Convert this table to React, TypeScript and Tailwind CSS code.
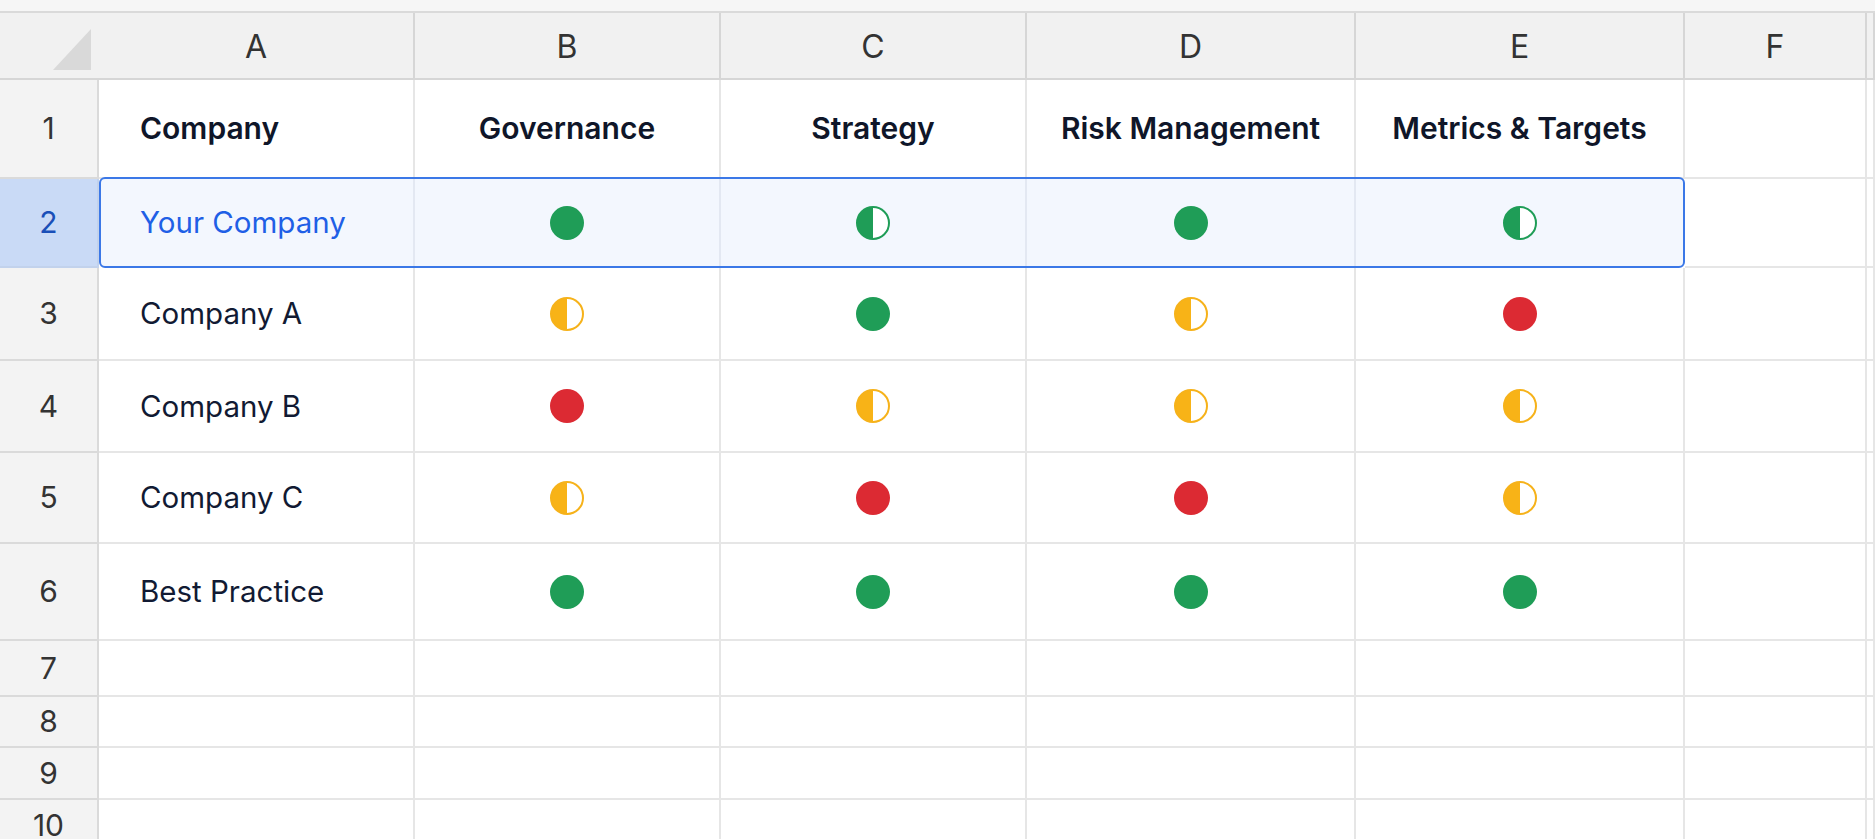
type Mark = "g" | "gh" | "y" | "yh" | "r";

const dotClass: Record<Mark, string> = {
  g: "bg-[#1f9d57]",
  gh: "border-2 border-[#1f9d57] bg-[linear-gradient(to_right,#1f9d57_50%,#ffffff_50%)]",
  y: "bg-[#f8b317]",
  yh: "border-2 border-[#f6b21a] bg-[linear-gradient(to_right,#f8b317_50%,#ffffff_50%)]",
  r: "bg-[#dc2a33]",
};

const Dot = ({ mark }: { mark: Mark }) => (
  <span className={`block w-[34px] h-[34px] rounded-full ${dotClass[mark]}`} />
);

const rows: { n: number; name: string; marks: Mark[]; h: string }[] = [
  { n: 3, name: "Company A", marks: ["yh", "g", "yh", "r"], h: "h-[93px]" },
  { n: 4, name: "Company B", marks: ["r", "yh", "yh", "yh"], h: "h-[92px]" },
  { n: 5, name: "Company C", marks: ["yh", "r", "r", "yh"], h: "h-[91px]" },
  { n: 6, name: "Best Practice", marks: ["g", "g", "g", "g"], h: "h-[97px]" },
];

const emptyRows = [
  { n: 7, h: "h-[56px]" },
  { n: 8, h: "h-[51px]" },
  { n: 9, h: "h-[52px]" },
  { n: 10, h: "h-[52px]" },
];

const font = "font-['Inter','Liberation_Sans',sans-serif]";
const gridCols = "grid grid-cols-[99px_316px_306px_306px_329px_329px_182px_1fr]";
const cell = "border-r-2 border-b-2 border-[#e6e6e6]";
const rowHead =
  "flex items-center justify-center bg-[#f3f3f3] border-r-2 border-b-2 border-[#dadada] text-[30px] text-[#333333]";

const RowHead = ({ n, active }: { n: number; active?: boolean }) => (
  <div
    className={
      active
        ? "flex items-center justify-center bg-[#c9daf6] border-r-2 border-b-2 border-[#c2d2ec] text-[30px] text-[#1a4fb8]"
        : rowHead
    }
  >
    {n}
  </div>
);

export default function App() {
  return (
    <div className={`w-full h-screen overflow-hidden bg-white ${font}`}>
      <div className="h-[13px] bg-[#f6f6f6] border-b-2 border-[#dadada]" />

      {/* column letters */}
      <div className={`${gridCols} h-[67px] bg-[#f1f1f1]`}>
        <div className="flex items-end justify-end pr-[8px] pb-[8px] border-b-2 border-[#d6d6d6]">
          <svg width="38" height="41" viewBox="0 0 38 41">
            <polygon points="38,0 38,41 0,41" fill="#d9d9d9" />
          </svg>
        </div>
        {["A", "B", "C", "D", "E", "F", ""].map((c, i) => (
          <div
            key={i}
            className="flex items-center justify-center pt-[2px] border-r-2 border-b-2 border-[#d6d6d6] text-[32px] text-[#333333]"
          >
            {c}
          </div>
        ))}
      </div>

      {/* header row */}
      <div className={`${gridCols} h-[99px]`}>
        <RowHead n={1} />
        <div className={`${cell} flex items-center pl-[41px] text-[30px] font-semibold text-[#0f1629]`}>
          Company
        </div>
        {["Governance", "Strategy", "Risk Management", "Metrics & Targets"].map((t) => (
          <div
            key={t}
            className={`${cell} flex items-center justify-center text-[30px] font-semibold text-[#0f1629]`}
          >
            {t}
          </div>
        ))}
        <div className={cell} />
        <div className={cell} />
      </div>

      {/* selected row */}
      <div className={`${gridCols} h-[89px]`}>
        <RowHead n={2} active />
        <div className="col-span-5 grid grid-cols-[314px_306px_306px_329px_1fr] border-2 border-[#3b78e7] rounded-[6px] bg-[#f3f7fe] -mt-[2px] h-[91px]">
          <div className="flex items-center pl-[39px] text-[29.5px] text-[#1f5fe6] border-r-2 border-[#e3e8f2]">
            Your Company
          </div>
          {(["g", "gh", "g", "gh"] as Mark[]).map((m, i) => (
            <div
              key={i}
              className={`flex items-center justify-center ${i < 3 ? "border-r-2 border-[#e3e8f2]" : ""}`}
            >
              <Dot mark={m} />
            </div>
          ))}
        </div>
        <div className={cell} />
        <div className={cell} />
      </div>

      {rows.map((r) => (
        <div key={r.n} className={`${gridCols} ${r.h}`}>
          <RowHead n={r.n} />
          <div className={`${cell} flex items-center pl-[41px] text-[29.5px] text-[#111a33]`}>
            {r.name}
          </div>
          {r.marks.map((m, i) => (
            <div key={i} className={`${cell} flex items-center justify-center`}>
              <Dot mark={m} />
            </div>
          ))}
          <div className={cell} />
          <div className={cell} />
        </div>
      ))}

      {emptyRows.map((r) => (
        <div key={r.n} className={`${gridCols} ${r.h}`}>
          <RowHead n={r.n} />
          {[0, 1, 2, 3, 4, 5, 6].map((i) => (
            <div key={i} className={cell} />
          ))}
        </div>
      ))}
    </div>
  );
}
